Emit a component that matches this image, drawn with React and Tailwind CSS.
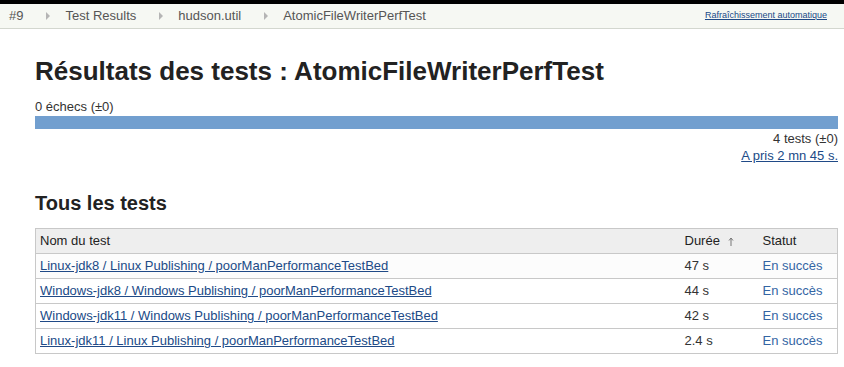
import React from "react";

const Arrow = () => (
  <svg width="4" height="8" viewBox="0 0 4 8" className="ml-[23px] mr-[15px]">
    <path d="M0 0 L4 4 L0 8 Z" fill="#b5b5b5" />
  </svg>
);

const SortUp = () => (
  <svg width="6" height="9" viewBox="0 0 6 9" className="inline-block ml-[8px] align-[-1px]">
    <path d="M3 1 V9 M1 3.5 L3 1 L5 3.5" stroke="#777" strokeWidth="1" fill="none" />
  </svg>
);

const rows = [
  ["Linux-jdk8 / Linux Publishing / poorManPerformanceTestBed", "47 s"],
  ["Windows-jdk8 / Windows Publishing / poorManPerformanceTestBed", "44 s"],
  ["Windows-jdk11 / Windows Publishing / poorManPerformanceTestBed", "42 s"],
  ["Linux-jdk11 / Linux Publishing / poorManPerformanceTestBed", "2.4 s"],
];

export default function App() {
  return (
    <div className="w-[844px] h-[367px] bg-white overflow-hidden text-[13px] text-[#333]" style={{ fontFamily: '"Liberation Sans", Arial, sans-serif' }}>
      <div className="h-[4px] bg-black" />
      <div className="h-[25px] bg-[#f6f8f3] border-b border-[#d3d7cf] flex items-center pl-[9px] pr-[17px] text-[#555]">
        <span>#9</span>
        <Arrow />
        <span>Test Results</span>
        <Arrow />
        <span>hudson.util</span>
        <Arrow />
        <span>AtomicFileWriterPerfTest</span>
        <a className="ml-auto text-[9px] text-[#204a87] underline">Rafraîchissement automatique</a>
      </div>
      <div className="pl-[35px] pr-[6px]">
        <h1 className="text-[26px] font-bold text-[#222] mt-[26px] leading-[32px]">Résultats des tests : AtomicFileWriterPerfTest</h1>
        <div className="mt-[12px] leading-[15px]">0 échecs (±0)</div>
        <div className="h-[13px] bg-[#729fcf] mt-[2px]" />
        <div className="text-right leading-[16px] mt-[2px]">4 tests (±0)</div>
        <div className="text-right leading-[16px] mt-[1px]"><a className="text-[#204a87] underline">A pris 2 mn 45 s.</a></div>
        <h2 className="text-[20px] font-bold text-[#222] mt-[27px] leading-[24px]">Tous les tests</h2>
        <table className="w-full mt-[13px] border-collapse border border-[#c8c8c8]">
          <thead>
            <tr className="bg-[#eeeeee] h-[25px]">
              <th className="text-left font-normal pl-[4px] text-[#222]">Nom du test</th>
              <th className="text-left font-normal pl-[4px] w-[78px] text-[#222]">Durée<SortUp /></th>
              <th className="text-left font-normal pl-[4px] w-[79px] text-[#222]">Statut</th>
            </tr>
          </thead>
          <tbody>
            {rows.map(([n, d], i) => (
              <tr key={i} className={`h-[25px] border-t border-[#c8c8c8] ${i === 0 ? "bg-[#fcfcfc]" : "bg-white"}`}>
                <td className="pl-[4px]"><a className="text-[#204a87] underline">{n}</a></td>
                <td className="pl-[4px]">{d}</td>
                <td className="pl-[4px] text-[#3465a4]">En succès</td>
              </tr>
            ))}
          </tbody>
        </table>
      </div>
    </div>
  );
}
